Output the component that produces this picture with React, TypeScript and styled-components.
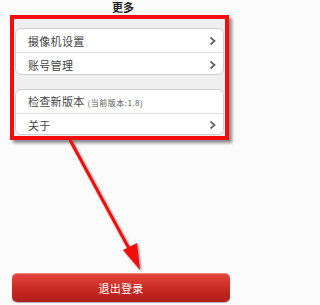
import React from 'react';
import styled, { createGlobalStyle } from 'styled-components';

const GlobalStyle = createGlobalStyle`
  html, body {
    margin: 0;
    padding: 0;
    background: #fbfbfb;
  }
  body {
    font-family: "Noto Sans CJK SC", "Noto Sans", sans-serif;
  }
`;

const Page = styled.div`
  position: relative;
  width: 246px;
  height: 305px;
  overflow: hidden;
  display: flex;
  flex-direction: column;
`;

const Title = styled.div`
  height: 15px;
  line-height: 14px;
  text-align: center;
  font-size: 11px;
  font-weight: 700;
  color: #222;
`;

const Frame = styled.div`
  box-sizing: border-box;
  width: 219px;
  height: 125px;
  margin-left: 10px;
  border: 4px solid #f30d0d;
  background: #efefef;
  padding: 9px 1px 1px 1px;
  display: flex;
  flex-direction: column;
  gap: 14px;
  box-shadow: 3px 3px 3px rgba(0, 0, 0, 0.45);
`;

const Group = styled.div`
  background: #fff;
  border: 1px solid #cfcfcf;
  border-radius: 6px;
  overflow: hidden;
`;

const Row = styled.div<{ last?: boolean }>`
  height: 23px;
  display: flex;
  align-items: center;
  padding: 0 7px 0 12px;
  border-bottom: ${(p) => (p.last ? 'none' : '1px solid #dedede')};
  font-size: 11px;
  letter-spacing: 0.3px;
  color: #444;
`;

const Label = styled.span`
  flex: 1;
`;

const Note = styled.span`
  font-size: 8px;
  letter-spacing: 0.5px;
  color: #555;
  margin-left: 3px;
`;

const LogoutButton = styled.div`
  margin: 133px 0 0 12px;
  width: 218px;
  height: 29px;
  border-radius: 5px;
  background: linear-gradient(#e4483f, #c72a24 55%, #b01d18);
  box-shadow: inset 0 1px 0 rgba(255, 255, 255, 0.35), 0 1px 1px rgba(0, 0, 0, 0.3);
  display: flex;
  align-items: center;
  justify-content: center;
  color: #fff;
  font-size: 11px;
  letter-spacing: 0.3px;
`;

const ArrowLayer = styled.svg`
  position: absolute;
  left: 0;
  top: 0;
  pointer-events: none;
`;

const Chevron = () => (
  <svg width="7" height="10" viewBox="0 0 7 10">
    <path d="M1.5 1.5 L5.5 5 L1.5 8.5" fill="none" stroke="#666" strokeWidth="1.8" />
  </svg>
);

export default function App() {
  return (
    <Page>
      <GlobalStyle />
      <Title>更多</Title>
      <Frame>
        <Group>
          <Row>
            <Label>摄像机设置</Label>
            <Chevron />
          </Row>
          <Row last>
            <Label>账号管理</Label>
            <Chevron />
          </Row>
        </Group>
        <Group>
          <Row>
            <Label>
              检查新版本<Note>(当前版本:1.8)</Note>
            </Label>
          </Row>
          <Row last>
            <Label>关于</Label>
            <Chevron />
          </Row>
        </Group>
      </Frame>
      <LogoutButton>退出登录</LogoutButton>
      <ArrowLayer width="246" height="305">
        <defs>
          <filter id="sh" x="-20%" y="-20%" width="140%" height="140%">
            <feDropShadow dx="1.5" dy="1.5" stdDeviation="1" floodColor="#000" floodOpacity="0.45" />
          </filter>
        </defs>
        <g filter="url(#sh)">
          <line x1="70" y1="140" x2="133" y2="256" stroke="#f20c0c" strokeWidth="3" />
          <polygon points="140,270 123,250 137,243" fill="#f20c0c" />
        </g>
      </ArrowLayer>
    </Page>
  );
}
